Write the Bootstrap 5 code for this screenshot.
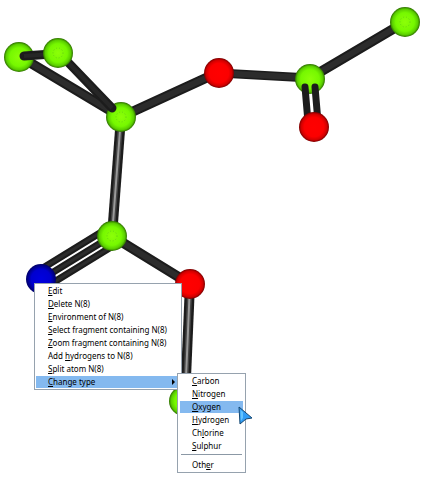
<!DOCTYPE html>
<html lang="en">
<head>
<meta charset="utf-8">
<meta name="viewport" content="width=device-width, initial-scale=1">
<title>Molecule editor</title>
<link rel="stylesheet" href="https://cdn.jsdelivr.net/npm/bootstrap@5.3.0/dist/css/bootstrap.min.css">
<style>
  body { font-family: "Noto Sans", "Open Sans", sans-serif; background: #fff; }
  .context-menu {
    --bs-dropdown-min-width: 0;
    --bs-dropdown-border-radius: 0;
    --bs-dropdown-border-color: #96a2ae;
    --bs-dropdown-padding-y: 1px;
    --bs-dropdown-padding-x: 1px;
    --bs-dropdown-font-size: 8px;
    --bs-dropdown-item-padding-y: 0;
    --bs-dropdown-item-padding-x: 12px;
    --bs-dropdown-link-color: #000;
    --bs-dropdown-link-hover-bg: #84b9ef;
    --bs-dropdown-link-active-color: #000;
    --bs-dropdown-link-active-bg: #84b9ef;
    --bs-dropdown-divider-bg: #8b98a5;
    --bs-dropdown-divider-margin-y: 0;
    gap: 1px;
    line-height: 12px;
  }
  .context-menu .dropdown-divider { margin: 1px 2px 3px; opacity: 1; }
  .atom-menu { left: 34px; top: 283px; width: 148px; }
  .type-menu { left: 177px; top: 373px; width: 69px; }
  .type-menu .dropdown-item { margin: 0 1px; width: auto; }
  .pointer { left: 238px; top: 406px; z-index: 1100; }
</style>
<script src="https://cdn.jsdelivr.net/npm/bootstrap@5.3.0/dist/js/bootstrap.bundle.min.js"></script>
</head>
<body>
<main class="position-relative">
  <svg class="d-block w-100" viewBox="0 0 427 486" role="img" aria-label="Ball and stick model of a molecule">
    <defs>
      <radialGradient id="carbon"><stop offset="0" stop-color="#8cff08"/><stop offset=".62" stop-color="#76f800"/><stop offset=".85" stop-color="#5bcf00"/><stop offset="1" stop-color="#2e7000"/></radialGradient>
      <radialGradient id="oxygen"><stop offset="0" stop-color="#ff0000"/><stop offset=".65" stop-color="#fb0000"/><stop offset=".86" stop-color="#d20000"/><stop offset="1" stop-color="#780000"/></radialGradient>
      <radialGradient id="nitrogen"><stop offset="0" stop-color="#0000e0"/><stop offset=".65" stop-color="#0000cf"/><stop offset="1" stop-color="#000068"/></radialGradient>
    </defs>
    <g stroke="#1c1c1c" stroke-width="10" fill="none">
      <path d="M19 56L121 117M121 117L219 72M310 78L405 22M112 236L190 284"/>
      <path d="M219 73L310 78" stroke-width="9"/>
      <path d="M121 117L112 236"/>
      <path d="M190 284L185 401"/>
      <path d="M108 228L38 271M112 236L42 279M116 244L46 287" stroke-width="7"/>
    </g>
    <g stroke="#2c2c2c" stroke-width="6" fill="none">
      <path d="M19 56L121 117M121 117L219 72M219 73L310 78M310 78L405 22M112 236L190 284"/>
      <path d="M108 228L38 271M112 236L42 279M116 244L46 287" stroke-width="3"/>
      <path d="M121 117L112 236M190 284L185 401" stroke="#444" stroke-width="5"/>
      <path d="M121 117L112 236M190 284L185 401" stroke="#999" stroke-width="2"/>
    </g>
    <g fill="url(#carbon)">
      <circle cx="19" cy="57" r="15"/>
      <circle cx="121" cy="117" r="15"/>
      <circle cx="310" cy="79" r="15"/>
      <circle cx="405" cy="22" r="15"/>
      <circle cx="112" cy="236" r="15"/>
      <circle cx="184" cy="401" r="15"/>
    </g>
    <g stroke="#1c1c1c" fill="none" stroke-linecap="round">
      <path d="M24 56L52 54" stroke-width="9"/>
      <path d="M62 56L112 108" stroke-width="9"/>
      <path d="M305 87L308 122M315 87L318 122" stroke-width="7"/>
    </g>
    <path d="M24 56L52 54M62 56L112 108" stroke="#262626" stroke-width="4" fill="none"/>
    <circle cx="58" cy="53" r="15" fill="url(#carbon)"/>
    <circle cx="219" cy="73" r="15" fill="url(#oxygen)"/>
    <circle cx="314" cy="127" r="15" fill="url(#oxygen)"/>
    <circle cx="190" cy="284" r="15" fill="url(#oxygen)"/>
    <circle cx="41" cy="279" r="15" fill="url(#nitrogen)"/>
    <g fill="none" stroke="#67d514" stroke-width="1" stroke-dasharray="1 2">
      <circle cx="58" cy="53" r="5"/><circle cx="121" cy="117" r="5"/>
      <circle cx="405" cy="22" r="5"/><circle cx="112" cy="236" r="5"/>
    </g>
  </svg>

  <div class="dropdown-menu context-menu atom-menu d-flex flex-column position-absolute">
    <button type="button" class="dropdown-item"><u>E</u>dit</button>
    <button type="button" class="dropdown-item"><u>D</u>elete N(8)</button>
    <button type="button" class="dropdown-item"><u>E</u>nvironment of N(8)</button>
    <button type="button" class="dropdown-item"><u>S</u>elect fragment containing N(8)</button>
    <button type="button" class="dropdown-item"><u>Z</u>oom fragment containing N(8)</button>
    <button type="button" class="dropdown-item">Add <u>h</u>ydrogens to N(8)</button>
    <button type="button" class="dropdown-item"><u>S</u>plit atom N(8)</button>
    <button type="button" class="dropdown-item active d-flex align-items-center justify-content-between pe-1" aria-expanded="true"><span><u>C</u>hange type</span>
      <svg width="4" height="8" viewBox="0 0 4 8" aria-hidden="true"><path d="M0 1L3 4L0 7Z"/></svg></button>
  </div>

  <div class="dropdown-menu context-menu type-menu d-flex flex-column position-absolute">
    <button type="button" class="dropdown-item"><u>C</u>arbon</button>
    <button type="button" class="dropdown-item"><u>N</u>itrogen</button>
    <button type="button" class="dropdown-item active"><u>O</u>xygen</button>
    <button type="button" class="dropdown-item"><u>H</u>ydrogen</button>
    <button type="button" class="dropdown-item">Ch<u>l</u>orine</button>
    <button type="button" class="dropdown-item"><u>S</u>ulphur</button>
    <hr class="dropdown-divider">
    <button type="button" class="dropdown-item">Oth<u>e</u>r</button>
  </div>

  <svg class="pointer position-absolute" width="16" height="20" viewBox="0 0 16 20" aria-hidden="true">
    <path d="M1 1L14 12L8 13L2 18Z" fill="#2f9cf5" stroke="#15466f"/>
    <path d="M2.500 4L2.800 15L5 12V6Z" fill="#62c4ff"/>
  </svg>
</main>
</body>
</html>
